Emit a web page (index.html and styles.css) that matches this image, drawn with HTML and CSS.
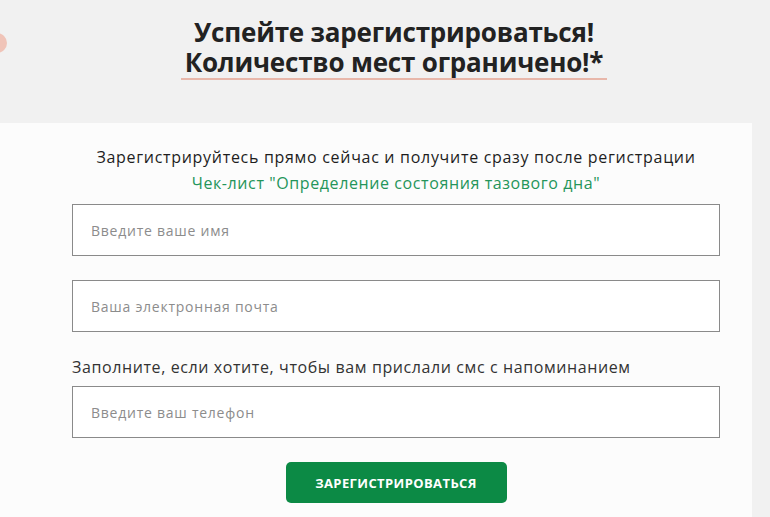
FILE: index.html
```html
<!DOCTYPE html>
<html lang="ru">
<head>
<meta charset="utf-8">
<link rel="stylesheet" href="styles.css">
</head>
<body>
<header class="top">
  <span class="dot"></span>
  <h1 class="title"><span class="title-inner"><span class="title-line">Успейте зарегистрироваться!</span><span class="title-line">Количество мест ограничено!*</span></span></h1>
</header>
<section class="card">
  <form class="form">
    <p class="lead">Зарегистрируйтесь прямо сейчас и получите сразу после регистрации</p>
    <p class="gift">Чек-лист "Определение состояния тазового дна"</p>
    <input class="field field-first" type="text" placeholder="Введите ваше имя">
    <input class="field field-second" type="email" placeholder="Ваша электронная почта">
    <p class="note">Заполните, если хотите, чтобы вам прислали смс с напоминанием</p>
    <input class="field" type="tel" placeholder="Введите ваш телефон">
    <div class="actions"><button class="btn" type="button">ЗАРЕГИСТРИРОВАТЬСЯ</button></div>
  </form>
</section>
</body>
</html>
```
FILE: styles.css
```css
html, body {
  margin: 0;
  padding: 0;
  background: #f1f1f1;
  height: 100%;
  overflow: hidden;
}
body {
  font-family: "Open Sans", "Liberation Sans", sans-serif;
  color: #222;
}
.top {
  position: relative;
  height: 123px;
  display: flex;
  justify-content: center;
  padding-left: 18px;
  box-sizing: border-box;
}
.dot {
  position: absolute;
  left: -13px;
  top: 33px;
  width: 20px;
  height: 20px;
  border-radius: 50%;
  background: #f0c4b8;
}
.title {
  margin: 17px 0 0;
  font-size: 26px;
  line-height: 30px;
  font-weight: 700;
  text-align: center;
  color: #222;
  letter-spacing: -0.2px;
}
.title-inner {
  display: flex;
  flex-direction: column;
  align-items: center;
  padding: 0 4px 1px;
  border-bottom: 2px solid #e8b7aa;
}
.title-line {
  display: block;
  height: 30px;
}
.card {
  background: #fcfcfc;
  margin-right: 18px;
  height: 394px;
  box-sizing: border-box;
  padding: 21px 0 0 72px;
}
.form {
  width: 648px;
  display: flex;
  flex-direction: column;
}
.lead {
  margin: 0;
  font-size: 16px;
  line-height: 26px;
  letter-spacing: 0.7px;
  text-align: center;
  color: #1e1e1e;
}
.gift {
  margin: 0;
  font-size: 16px;
  line-height: 26px;
  letter-spacing: 0.6px;
  text-align: center;
  color: #24955a;
  font-weight: 500;
}
.field {
  display: block;
  width: 648px;
  height: 52px;
  box-sizing: border-box;
  border: 1px solid #8a8a8a;
  background: #fff;
  padding: 0 18px;
  font-family: "Open Sans", "Liberation Sans", sans-serif;
  font-size: 14px;
  letter-spacing: 0.75px;
  outline: none;
  margin: 0;
}
.field::placeholder {
  color: #8c8c8c;
}
.field-first {
  margin-top: 8px;
}
.field-second {
  margin-top: 24px;
}
.note {
  margin: 24px 0 0;
  font-size: 16px;
  line-height: 22px;
  letter-spacing: 0.6px;
  color: #333;
  padding-bottom: 8px;
}
.actions {
  display: flex;
  justify-content: center;
  margin-top: 24px;
}
.btn {
  width: 221px;
  height: 41px;
  border: 0;
  border-radius: 5px;
  background: #0c8a45;
  color: #fff;
  font-family: "Open Sans", "Liberation Sans", sans-serif;
  font-weight: 700;
  font-size: 13px;
  letter-spacing: 0.4px;
}
```
